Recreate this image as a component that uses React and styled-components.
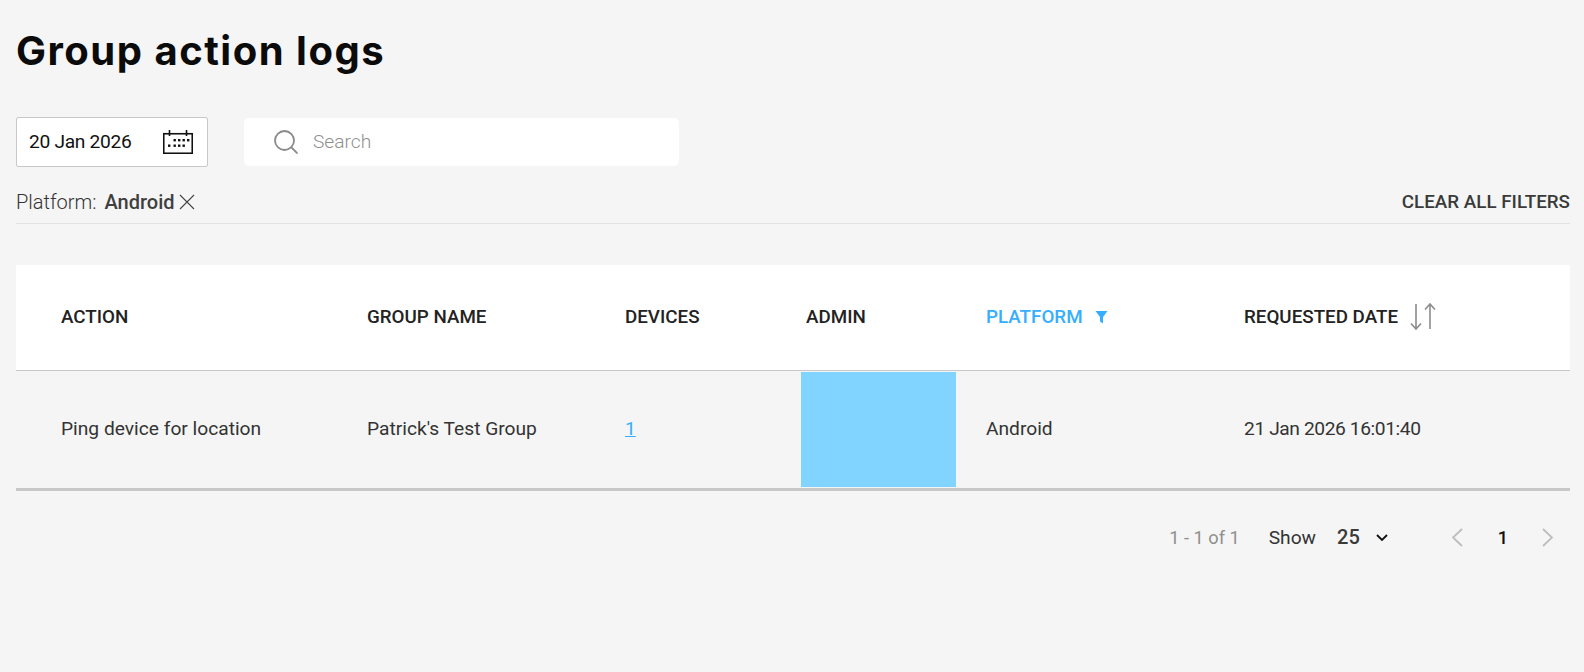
import React from "react";
import styled, { createGlobalStyle } from "styled-components";

const Global = createGlobalStyle`
  html, body { margin: 0; padding: 0; background: #f5f5f5; }
  body { font-family: Roboto, "Noto Sans", "Liberation Sans", sans-serif; color: #222; }
`;

const Page = styled.div`
  height: 672px;
  padding: 0 14px 0 16px;
  box-sizing: border-box;
  overflow: hidden;
`;

const Title = styled.h1`
  margin: 0;
  padding-top: 28px;
  height: 117px;
  box-sizing: border-box;
  font-family: "Inter", sans-serif;
  font-size: 40px;
  line-height: 46px;
  font-weight: 700;
  letter-spacing: 1.5px;
  color: #0b0b0b;
`;

const Controls = styled.div`
  display: flex;
  align-items: center;
  gap: 36px;
  height: 50px;
`;

const DateBox = styled.div`
  width: 192px;
  height: 50px;
  box-sizing: border-box;
  display: flex;
  align-items: center;
  justify-content: space-between;
  padding: 0 14px 0 12px;
  background: #fff;
  border: 1px solid #c8c8c8;
  border-radius: 2px;
  font-size: 19.2px;
  letter-spacing: -0.3px;
  color: #111;
`;

const DateText = styled.span`
  margin-bottom: 2px;
`;

const SearchBox = styled.div`
  width: 435px;
  height: 48px;
  box-sizing: border-box;
  display: flex;
  align-items: center;
  gap: 15px;
  padding-left: 30px;
  background: #fff;
  border-radius: 5px;
  font-size: 19.2px;
  font-weight: 300;
  color: #8f8f8f;
`;

const SearchLabel = styled.span`
  margin-bottom: 2px;
`;

const FilterBar = styled.div`
  display: flex;
  align-items: center;
  justify-content: space-between;
  height: 57px;
  margin-bottom: 41px;
  box-sizing: border-box;
  border-bottom: 1px solid #e2e2e2;
  padding-top: 13px;
  font-size: 20px;
  font-weight: 300;
  color: #333;
`;

const FilterGroup = styled.div`
  display: flex;
  align-items: center;
`;

const FilterValue = styled.b`
  margin: 0 4px 0 8px;
  font-weight: 500;
  color: #3f3f3f;
`;

const ClearAll = styled.span`
  font-size: 18.8px;
  font-weight: 500;
  color: #3a3a3a;
`;

const Row = styled.div`
  display: grid;
  grid-template-columns: 45px 306px 258px 181px 180px 258px 1fr;
  align-items: center;
`;

const HeadRow = styled(Row)`
  height: 106px;
  padding-bottom: 2px;
  background: #fff;
  border-bottom: 1px solid #c8c8c8;
  box-sizing: border-box;
`;

const BodyRow = styled(Row)`
  height: 120px;
  box-sizing: border-box;
  border-bottom: 3px solid #c8c8c8;
`;

const Head = styled.div`
  display: flex;
  align-items: center;
  font-size: 18.8px;
  font-weight: 500;
  color: ${(p) => (p.$active ? "#36aeff" : "#222")};
`;

const Cell = styled.div`
  margin-bottom: 2px;
  font-size: 19.2px;
  color: #333;
  letter-spacing: ${(p) => (p.$numeric ? "-0.4px" : "0")};
`;

const DeviceLink = styled.a`
  color: #36aeff;
  text-decoration: underline;
  font-size: 19.2px;
`;

const Redacted = styled.div`
  width: 155px;
  height: 115px;
  margin-left: -5px;
  background: #81d4ff;
`;

const Footer = styled.div`
  display: flex;
  align-items: center;
  justify-content: flex-end;
  height: 92px;
  padding-right: 17px;
  font-size: 19.2px;
`;

const Range = styled.span`
  color: #8f8f8f;
  font-size: 18.2px;
  margin-right: 29px;
`;

const ShowLabel = styled.span`
  color: #333;
  margin-right: 21px;
`;

const ShowValue = styled.span`
  display: flex;
  align-items: center;
  gap: 16px;
  font-weight: 500;
  font-size: 20px;
  color: #3a3a3a;
  margin-right: 64px;
`;

const PageNumber = styled.span`
  margin: 0 34px 0 35px;
  font-weight: 500;
  font-size: 18px;
  color: #111;
`;

const CalendarIcon = () => (
  <svg width="30" height="24" viewBox="0 0 30 24" fill="none" stroke="#111">
    <rect x="0.75" y="3.75" width="28.5" height="19.5" strokeWidth="1.6" />
    <path d="M6.5 0v6M23.5 0v6" strokeWidth="1.6" />
    <g fill="#111" stroke="none">
      <rect x="10.5" y="9" width="2.4" height="2.4" />
      <rect x="15" y="9" width="2.4" height="2.4" />
      <rect x="19.5" y="9" width="2.4" height="2.4" />
      <rect x="24" y="9" width="2.4" height="2.4" />
      <rect x="5" y="14.5" width="2.4" height="2.4" />
      <rect x="10.5" y="14.5" width="2.4" height="2.4" />
      <rect x="15" y="14.5" width="2.4" height="2.4" />
      <rect x="19.5" y="14.5" width="2.4" height="2.4" />
    </g>
  </svg>
);

const MagnifierIcon = () => (
  <svg width="24" height="24" viewBox="0 0 24 24" fill="none" stroke="#8a8a8a" strokeWidth="1.8">
    <circle cx="10.5" cy="10.5" r="9.5" />
    <path d="M17.5 17.5L23.5 23.5" />
  </svg>
);

const CloseIcon = () => (
  <svg width="16" height="16" viewBox="0 0 16 16" fill="none" stroke="#444" strokeWidth="1.1">
    <path d="M1 1l14 14M15 1L1 15" />
  </svg>
);

const FilterIcon = () => (
  <svg width="13" height="14" viewBox="0 0 13 14" style={{ marginLeft: 12 }}>
    <path d="M0.5 1h12L8 7v6.5L5 11.5V7z" fill="#36aeff" />
  </svg>
);

const SortIcon = () => (
  <svg width="26" height="27" viewBox="0 0 26 27" fill="none" stroke="#8c8c8c" strokeWidth="1.6" style={{ marginLeft: 12 }}>
    <path d="M6 1v25M1 20.5l5 5.5 5-5.5" />
    <path d="M20 26V1M15 6.5l5-5.5 5 5.5" />
  </svg>
);

const ChevronDownIcon = () => (
  <svg width="12" height="7" viewBox="0 0 12 7" fill="none" stroke="#111" strokeWidth="1.8">
    <path d="M1 1l5 5 5-5" />
  </svg>
);

const PagerArrow = ({ $right }) => (
  <svg width="11" height="19" viewBox="0 0 11 19" fill="none" stroke="#bdbdbd" strokeWidth="1.8">
    <path d={$right ? "M1 1l9 8.5L1 18" : "M10 1L1 9.5l9 8.5"} />
  </svg>
);

export default function App() {
  return (
    <Page>
      <Global />
      <Title>Group action logs</Title>
      <Controls>
        <DateBox>
          <DateText>20 Jan 2026</DateText>
          <CalendarIcon />
        </DateBox>
        <SearchBox>
          <MagnifierIcon />
          <SearchLabel>Search</SearchLabel>
        </SearchBox>
      </Controls>
      <FilterBar>
        <FilterGroup>
          Platform:
          <FilterValue>Android</FilterValue>
          <CloseIcon />
        </FilterGroup>
        <ClearAll>CLEAR ALL FILTERS</ClearAll>
      </FilterBar>
      <HeadRow>
        <span />
        <Head>ACTION</Head>
        <Head>GROUP NAME</Head>
        <Head>DEVICES</Head>
        <Head>ADMIN</Head>
        <Head $active>
          PLATFORM
          <FilterIcon />
        </Head>
        <Head>
          REQUESTED DATE
          <SortIcon />
        </Head>
      </HeadRow>
      <BodyRow>
        <span />
        <Cell>Ping device for location</Cell>
        <Cell>Patrick's Test Group</Cell>
        <Cell>
          <DeviceLink href="#">1</DeviceLink>
        </Cell>
        <Redacted />
        <Cell>Android</Cell>
        <Cell $numeric>21 Jan 2026 16:01:40</Cell>
      </BodyRow>
      <Footer>
        <Range>1 - 1 of 1</Range>
        <ShowLabel>Show</ShowLabel>
        <ShowValue>
          25
          <ChevronDownIcon />
        </ShowValue>
        <PagerArrow />
        <PageNumber>1</PageNumber>
        <PagerArrow $right />
      </Footer>
    </Page>
  );
}
